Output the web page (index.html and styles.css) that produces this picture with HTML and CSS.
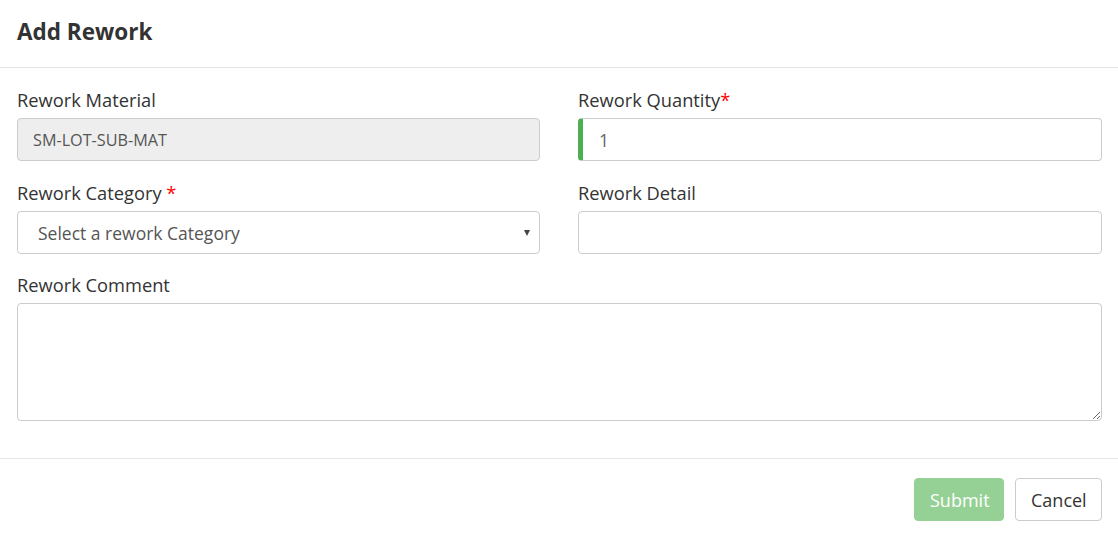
FILE: index.html
```html
<!DOCTYPE html>
<html>
<head>
<meta charset="utf-8">
<link rel="stylesheet" href="styles.css">
</head>
<body>
<div class="modal">
  <div class="modal-header">
    <h4 class="modal-title">Add Rework</h4>
  </div>
  <div class="modal-body">
    <div class="row">
      <div class="field">
        <label class="label">Rework Material</label>
        <input class="input disabled" type="text" value="SM-LOT-SUB-MAT" disabled>
      </div>
      <div class="field">
        <label class="label">Rework Quantity<span class="req">*</span></label>
        <input class="input valid" type="text" value="1">
      </div>
    </div>
    <div class="row second">
      <div class="field">
        <label class="label">Rework Category <span class="req">*</span></label>
        <div class="input select"><span class="placeholder">Select a rework Category</span><span class="caret"></span></div>
      </div>
      <div class="field">
        <label class="label">Rework Detail</label>
        <input class="input" type="text">
      </div>
    </div>
    <div class="field">
      <label class="label">Rework Comment</label>
      <textarea class="textarea"></textarea>
    </div>
  </div>
  <div class="modal-footer">
    <button class="btn btn-success">Submit</button>
    <button class="btn btn-default">Cancel</button>
  </div>
</div>
</body>
</html>
```
FILE: styles.css
```css
* { box-sizing: border-box; }
html, body { margin: 0; padding: 0; background: #fff; }
body { font-family: "Open Sans", "Liberation Sans", sans-serif; color: #333; }
.modal { width: 1118px; }
.modal-header {
  height: 68px;
  padding: 0 17px;
  border-bottom: 1px solid #e5e5e5;
  display: flex;
  align-items: center;
}
.modal-title { margin: 0 0 4px; font-size: 22.5px; font-weight: 700; color: #333; line-height: 28px; }
.modal-body { padding: 21px 16px 37px 17px; display: flex; flex-direction: column; gap: 20px; }
.row { display: grid; grid-template-columns: 523px 524px; column-gap: 38px; }
.row.second { margin-top: 1px; }
.field { display: flex; flex-direction: column; }
.label { font-size: 18.3px; line-height: 22px; margin-bottom: 7px; color: #333; }
.req { color: #f00; }
.input {
  height: 43px;
  width: 100%;
  margin: 0;
  border: 1px solid #ccc;
  border-radius: 4px;
  display: flex;
  align-items: center;
  padding: 0 15px;
  font-family: "Open Sans", "Liberation Sans", sans-serif;
  font-size: 17.5px;
  color: #555;
  background: #fff;
  outline: none;
}
.input.disabled { background: #eee; font-size: 16.2px; color: #555; -webkit-text-fill-color: #555; opacity: 1; }
.input.valid { border-left: 5px solid #4caf50; padding-left: 16px; color: #666; }
.input.select { padding-left: 20px; justify-content: space-between; padding-right: 9px; }
.placeholder { color: #555; }
.caret { width: 0; height: 0; border-left: 3.5px solid transparent; border-right: 3.5px solid transparent; border-top: 6px solid #444; margin-top: 1px; }
.textarea {
  height: 118px;
  width: 100%;
  margin: 0;
  border: 1px solid #ccc;
  border-radius: 4px;
  display: block;
  resize: both;
  font-family: "Open Sans", "Liberation Sans", sans-serif;
  outline: none;
}
.modal-footer {
  border-top: 1px solid #e5e5e5;
  padding: 19px 16px 16px;
  display: flex;
  justify-content: flex-end;
  gap: 11px;
}
.btn {
  height: 43px;
  border-radius: 4px;
  font-family: "Open Sans", "Liberation Sans", sans-serif;
  font-size: 18px;
  padding: 0 15px;
  border: 1px solid #ccc;
  background: #fff;
  color: #333;
}
.btn-success { background: #95d195; border-color: #95d195; color: #fff; width: 90px; }
.btn-default { width: 87px; }
```
